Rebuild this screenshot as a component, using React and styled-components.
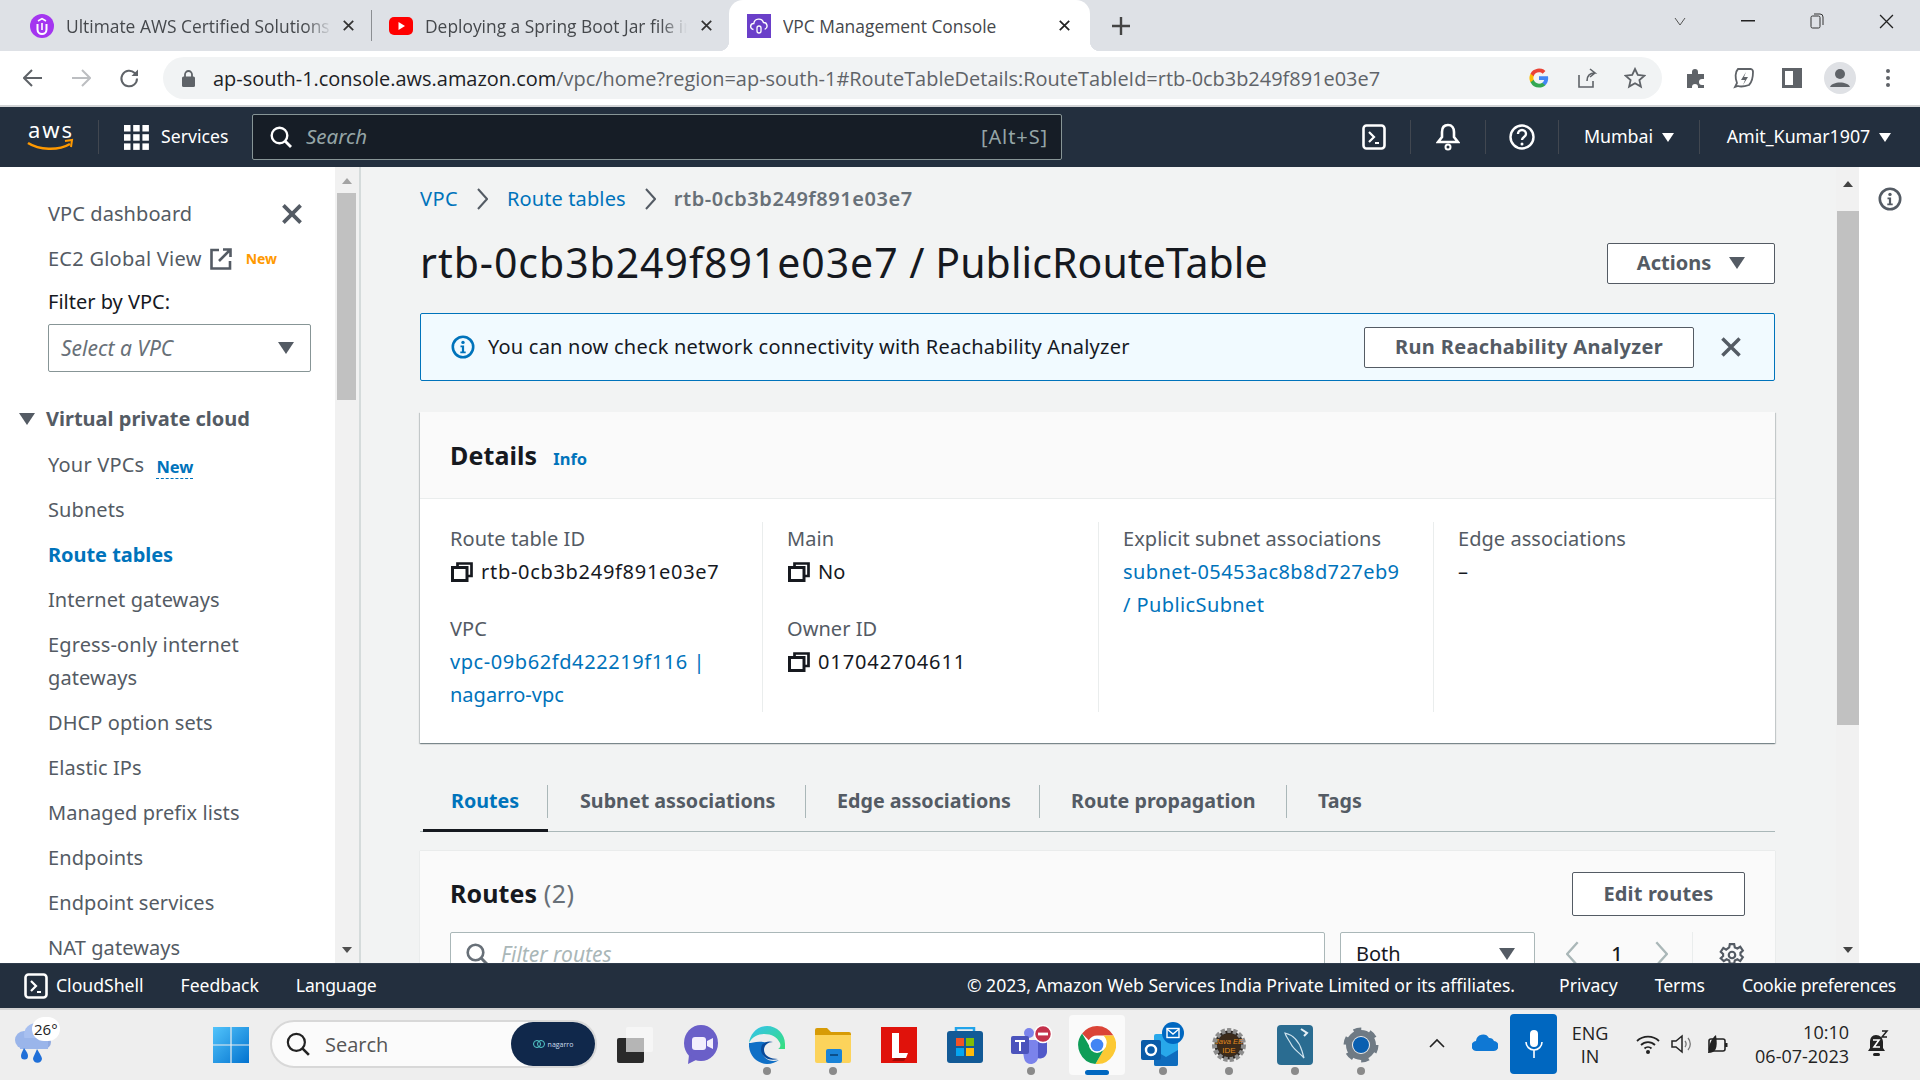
import React from "react";
import styled, { createGlobalStyle } from "styled-components";

const Global = createGlobalStyle`
  html, body { margin: 0; padding: 0; width: 1920px; height: 1080px; overflow: hidden; background: #fff; }
  * { box-sizing: border-box; }
  body { font-family: "Noto Sans", "Open Sans", Arial, sans-serif; }
`;
const Page = styled.div`width:1920px;height:1080px;display:flex;flex-direction:column;overflow:hidden;`;

/* Browser tabs */
const TabStrip = styled.div`height:51px;background:#dee1e6;display:flex;align-items:stretch;flex:none;`;
const Tab = styled.div`
  width:${p=>p.$w}px;flex:none;display:flex;align-items:center;padding-left:${p=>p.$pad}px;position:relative;
  background:${p=>p.$active?"#fff":"transparent"};border-radius:${p=>p.$active?"14px 14px 0 0":"0"};
  ${p=>p.$active?`
    &::before,&::after{content:'';position:absolute;bottom:0;width:10px;height:10px;}
    &::before{left:-10px;background:radial-gradient(circle at 0 0,transparent 10px,#fff 10.5px);}
    &::after{right:-10px;background:radial-gradient(circle at 100% 0,transparent 10px,#fff 10.5px);}
  `:""}
`;
const TabTitle = styled.span`
  font:17.4px "Open Sans","Noto Sans",sans-serif;color:#45484c;white-space:nowrap;width:${p=>p.$w}px;overflow:hidden;flex:none;margin-left:${p=>p.$ml}px;
  ${p=>p.$fade?"-webkit-mask-image:linear-gradient(90deg,#000 90%,transparent);":""}
`;
const TabClose = styled.span`margin-left:${p=>p.$ml}px;display:flex;flex:none;`;
const TabSep = styled.div`width:1px;height:31px;background:#8b8e92;align-self:center;flex:none;`;
const NewTab = styled.div`margin-left:21px;display:flex;align-items:center;flex:none;`;
const WinControls = styled.div`margin-left:auto;display:flex;align-items:center;height:42px;flex:none;`;
const WinBtn = styled.div`width:${p=>p.$w}px;display:flex;justify-content:center;flex:none;`;

/* Browser toolbar */
const Toolbar = styled.div`height:54px;background:#fff;display:flex;align-items:center;flex:none;padding-left:9px;`;
const NavBtn = styled.div`width:48px;display:flex;justify-content:center;flex:none;`;
const UrlPill = styled.div`width:1499px;height:42px;margin-left:10px;border-radius:21px;background:#f1f3f4;display:flex;align-items:center;flex:none;padding-left:19px;`;
const UrlHost = styled.span`font:19.95px "Open Sans","Noto Sans",sans-serif;color:#202124;margin-left:18px;white-space:nowrap;`;
const UrlRest = styled.span`color:#5f6368;`;
const PillIcons = styled.div`margin-left:auto;display:flex;align-items:center;padding-right:3px;`;
const PillIcon = styled.div`width:48px;display:flex;justify-content:center;`;
const ToolIcons = styled.div`display:flex;align-items:center;margin-left:10px;`;
const ToolIcon = styled.div`width:48px;display:flex;justify-content:center;`;
const Divider2 = styled.div`height:2px;background:#d2d4d6;flex:none;`;

/* AWS nav */
const AwsNav = styled.div`height:60px;background:#232f3e;display:flex;align-items:center;flex:none;color:#fff;`;
const LogoBox = styled.div`width:99px;height:34px;padding-left:26px;display:flex;align-items:center;border-right:1px solid #414750;flex:none;`;
const ServicesBtn = styled.div`width:153px;display:flex;align-items:center;padding-left:25px;gap:12px;font-size:17.7px;flex:none;`;
const NavText = styled.span`padding-bottom:2px;white-space:nowrap;`;
const SearchBox = styled.div`width:810px;height:46px;background:#161d26;border:1px solid #879596;border-radius:2px;display:flex;align-items:center;padding-left:17px;flex:none;`;
const SearchText = styled.span`font-style:italic;font-size:20.5px;color:#95a5a6;margin-left:14px;padding-bottom:2px;`;
const SearchKey = styled.span`font-size:20px;letter-spacing:.9px;color:#95a5a6;margin-left:auto;padding-right:13px;padding-bottom:2px;`;
const NavRight = styled.div`margin-left:auto;display:flex;align-items:center;height:34px;`;
const NavCell = styled.div`
  height:34px;width:${p=>p.$w}px;display:flex;align-items:center;justify-content:center;gap:${p=>p.$gap||10}px;font-size:17.8px;flex:none;
  padding-right:${p=>p.$pr||0}px;
  ${p=>p.$sep?"border-right:1px solid #414750;":""}
`;
const Caret = styled.span`width:0;height:0;border-left:${p=>p.$s||6}px solid transparent;border-right:${p=>p.$s||6}px solid transparent;border-top:${p=>(p.$s||6)*1.5}px solid ${p=>p.$c||"#fff"};flex:none;display:inline-block;`;

/* Layout */
const Body = styled.div`flex:1;display:flex;min-height:0;overflow:hidden;`;
const Side = styled.aside`width:335px;flex:none;background:#fff;display:flex;flex-direction:column;padding-top:24px;overflow:hidden;`;
const SideRow = styled.div`
  height:${p=>p.$h||45}px;display:flex;align-items:center;padding-left:48px;font-size:20px;letter-spacing:${p=>p.$ls||.08}px;flex:none;color:${p=>p.$c||"#545b64"};font-weight:${p=>p.$b?700:400};white-space:nowrap;
`;
const SideClose = styled.span`margin-left:auto;margin-right:33px;display:flex;`;
const NewTag = styled.span`font-size:${p=>p.$fs}px;font-weight:700;letter-spacing:0;color:${p=>p.$c};margin-left:${p=>p.$ml}px;${p=>p.$dash?"border-bottom:1px dashed #0073bb;line-height:23px;margin-top:4px;":""}`;
const FilterLabel = styled.div`height:41px;display:flex;align-items:center;padding-left:48px;font-size:20px;color:#16191f;flex:none;`;
const SideSelect = styled.div`margin:2px 0 0 48px;width:263px;height:48px;flex:none;border:1px solid #879596;border-radius:2px;display:flex;align-items:center;justify-content:space-between;padding:0 16px 0 12px;font-style:italic;font-size:21px;color:#687078;`;
const SideHead = styled.div`margin-top:23px;height:47px;display:flex;align-items:center;padding-left:19px;gap:11px;font-size:20px;font-weight:700;color:#545b64;flex:none;`;
const SideWrap = styled.div`padding:6px 40px 6px 48px;font-size:20px;line-height:33px;letter-spacing:.12px;color:#545b64;flex:none;`;
const VBar = styled.div`
  width:${p=>p.$w}px;flex:none;background:#f1f1f1;display:flex;flex-direction:column;align-items:center;justify-content:space-between;position:relative;
  ${p=>p.$line?"border-right:2px solid #d5dbdb;":""}
  padding:${p=>p.$pt}px 0 10px;
`;
const VThumb = styled.div`position:absolute;left:${p=>p.$l}px;right:${p=>p.$r}px;top:${p=>p.$t}px;height:${p=>p.$h}px;background:#c1c1c1;`;
const Arrow = styled.span`width:0;height:0;border-left:5px solid transparent;border-right:5px solid transparent;${p=>p.$up?`border-bottom:6px solid ${p.$c};`:`border-top:6px solid ${p.$c};`}`;

const Main = styled.main`width:1475px;flex:none;background:#f2f3f3;padding-left:59px;overflow:hidden;`;
const Column = styled.div`width:1355px;`;
const Crumbs = styled.div`height:64px;display:flex;align-items:center;font-size:20px;padding-bottom:2px;`;
const CrumbLink = styled.span`color:#0073bb;letter-spacing:${p=>p.$ls||0}px;`;
const CrumbNow = styled.span`color:#687078;font-weight:600;letter-spacing:.55px;`;
const CrumbGap = styled.span`width:${p=>p.$w}px;display:flex;justify-content:center;padding-top:2px;`;
const HeadRow = styled.div`height:41px;margin-top:12px;display:flex;align-items:center;justify-content:space-between;`;
const H1 = styled.h1`margin:0;font-size:41px;letter-spacing:.07px;font-weight:400;color:#16191f;white-space:nowrap;padding-bottom:3px;`;
const H1Id = styled.span`letter-spacing:.95px;`;
const Btn = styled.div`
  width:${p=>p.$w}px;height:${p=>p.$h}px;flex:none;background:#fff;border:1px solid #545b64;border-radius:2px;display:flex;align-items:center;justify-content:center;gap:${p=>p.$gap||0}px;
  font-size:20px;font-weight:700;letter-spacing:${p=>p.$ls||0}px;color:#545b64;white-space:nowrap;padding-bottom:2px;
`;
const Banner = styled.div`margin-top:29px;height:68px;background:#f1faff;border:1px solid #0073bb;border-radius:2px;display:flex;align-items:center;padding-left:30px;`;
const BannerText = styled.span`margin-left:13px;font-size:20px;letter-spacing:.22px;color:#16191f;padding-bottom:1px;`;
const BannerEnd = styled.div`margin-left:auto;display:flex;align-items:center;`;
const BannerClose = styled.span`width:80px;padding-right:6px;display:flex;justify-content:center;`;
const Card = styled.section`background:#fff;box-shadow:0 1px 1px 0 rgba(0,28,36,.3),1px 1px 1px 0 rgba(0,28,36,.15),-1px 1px 1px 0 rgba(0,28,36,.15);`;
const DetailsCard = styled(Card)`margin-top:31px;height:331px;`;
const CardHead = styled.div`height:87px;background:#fafafa;border-bottom:1px solid #eaeded;display:flex;align-items:center;padding-left:30px;gap:16px;`;
const H2 = styled.h2`margin:0;font-size:25px;letter-spacing:.1px;font-weight:700;color:#16191f;`;
const InfoLink = styled.span`font-size:16.5px;font-weight:700;color:#0073bb;padding-top:6px;`;
const Grid = styled.div`display:grid;grid-template-columns:343px 336px 335px 1fr;margin-top:23px;`;
const Col = styled.div`height:190px;padding-left:${p=>p.$p}px;${p=>p.$sep?"border-right:1px solid #eaeded;":""}`;
const Label = styled.div`font-size:20px;letter-spacing:.05px;line-height:33px;color:#545b64;margin-top:${p=>p.$mt||0}px;height:33px;`;
const Value = styled.div`font-size:20px;line-height:33px;letter-spacing:${p=>p.$ls||0}px;color:#16191f;display:flex;align-items:center;gap:8px;`;
const CopyIcon = styled.span`display:flex;margin-left:1px;`;
const Anchor = styled.div`font-size:20px;line-height:33px;letter-spacing:${p=>p.$ls||0}px;color:#0073bb;white-space:nowrap;`;

const Tabs = styled.div`margin-top:42px;height:47px;display:flex;border-bottom:1px solid #aab7b8;position:relative;padding-left:3px;`;
const TabBtn = styled.div`
  width:${p=>p.$w}px;height:47px;flex:none;
  font-size:19.7px;font-weight:700;color:${p=>p.$on?"#0073bb":"#545b64"};white-space:nowrap;
  ${p=>p.$on?"border-bottom:3px solid #16191f;":""}
`;
const TabInner = styled.div`height:33px;display:flex;align-items:center;padding-left:${p=>p.$p}px;padding-bottom:2px;${p=>p.$sep?"border-right:1px solid #aab7b8;":""}`;
const RoutesCard = styled(Card)`margin-top:19px;height:140px;background:#fafafa;box-shadow:0 0 1px 0 rgba(0,28,36,.2);padding:21px 30px 0;`;
const RoutesHead = styled.div`display:flex;justify-content:space-between;align-items:center;height:44px;`;
const RoutesTitle = styled(H2)`padding-bottom:2px;`;
const Count = styled.span`font-weight:400;color:#687078;letter-spacing:.5px;`;
const FilterRow = styled.div`display:flex;align-items:flex-start;margin-top:16px;`;
const FilterInput = styled.div`width:875px;height:48px;flex:none;background:#fff;border:1px solid #aab7b8;border-radius:2px;display:flex;align-items:center;padding:0 0 5px 15px;gap:13px;font-style:italic;font-size:21px;color:#aab7b8;`;
const BothSel = styled.div`width:195px;height:48px;margin-left:15px;flex:none;background:#fff;border:1px solid #aab7b8;border-radius:2px;display:flex;align-items:center;justify-content:space-between;padding:0 19px 5px 15px;font-size:20px;color:#16191f;`;
const Pager = styled.div`margin-left:31px;height:48px;width:127px;flex:none;display:flex;align-items:center;justify-content:space-between;font-size:20px;font-weight:500;color:#16191f;border-right:1px solid #eaeded;padding:0 24px 5px 0;`;
const GearBox = styled.div`width:52px;height:48px;display:flex;align-items:center;justify-content:flex-end;padding:0 0 3px;flex:none;`;

const RightPanel = styled.div`flex:1;background:#fff;display:flex;justify-content:center;padding-top:20px;`;

/* Footer */
const Footer = styled.footer`height:45px;flex:none;background:#232f3e;color:#fff;display:flex;align-items:center;font-size:17.6px;padding:0 24px 0 24px;border-top:1px solid #2f3c4c;`;
const FootLeft = styled.div`display:flex;align-items:center;`;
const FootRight = styled.div`margin-left:auto;display:flex;align-items:center;gap:37px;`;
const FootCopy = styled.span`margin-right:7px;letter-spacing:-.03px;padding-bottom:2px;`;
const FootLink = styled.span`margin-left:${p=>p.$ml||0}px;white-space:nowrap;letter-spacing:${p=>p.$ls||0}px;padding-bottom:2px;`;

/* Taskbar */
const Taskbar = styled.div`height:72px;flex:none;background:#eeeeee;border-top:2px solid #d3d3d3;display:flex;align-items:flex-start;position:relative;`;
const Weather = styled.div`width:198px;flex:none;height:70px;position:relative;`;
const WeatherCloud = styled.span`position:absolute;left:14px;top:12px;`;
const WeatherTemp = styled.span`position:absolute;left:32px;top:7px;font:15px "Open Sans",sans-serif;color:#222;background:#fff;border-radius:12px;padding:2px 2px;line-height:20px;`;
const Slot = styled.div`
  width:66px;height:70px;flex:none;display:flex;justify-content:center;align-items:center;position:relative;padding-bottom:1px;
  ${p=>p.$active?"&::before{content:'';position:absolute;left:5px;right:5px;top:5px;bottom:5px;background:#fafafa;border-radius:4px;}":""}
  & > svg{position:relative;}
`;
const Dot = styled.span`position:absolute;bottom:5px;left:50%;transform:translateX(-50%);width:${p=>p.$wide?24:8}px;height:${p=>p.$wide?5:8}px;border-radius:4px;background:${p=>p.$wide?"#0067c0":"#8a8a8a"};`;
const TaskSearch = styled.div`width:327px;height:48px;margin:10px 5px 0 6px;flex:none;background:#fbfbfb;border:2px solid #d8d8d8;border-radius:24px;display:flex;align-items:center;padding-left:14px;font:20px "Open Sans",sans-serif;color:#555;position:relative;`;
const SearchWord = styled.span`margin-left:15px;`;
const Nagarro = styled.div`position:absolute;right:0;top:0;width:84px;height:44px;border-radius:22px;background:#10284b;display:flex;align-items:center;justify-content:center;gap:3px;font:7px "Open Sans",sans-serif;color:#cde;`;
const Tray = styled.div`display:flex;align-items:center;height:70px;margin-left:${p=>p.$ml||0}px;flex:none;padding-bottom:${p=>p.$pb}px;`;
const TrayCell = styled.div`width:${p=>p.$w}px;display:flex;justify-content:center;flex:none;margin-left:${p=>p.$ml||0}px;padding-left:${p=>p.$pl||0}px;`;
const Mic = styled.div`width:47px;height:60px;margin:4px 0 0;background:#0067c0;border-radius:4px;display:flex;align-items:center;justify-content:center;flex:none;`;
const Lang = styled.div`width:66px;text-align:center;font:18px/23px "Open Sans",sans-serif;color:#222;flex:none;padding-top:2px;margin-right:2px;`;
const Clock = styled.div`width:110px;text-align:right;font:18px/24px "Open Sans",sans-serif;color:#222;flex:none;margin-left:-1px;`;

const X = ({s=14,c="#45484c",w=2}) => <svg width={s} height={s} viewBox="0 0 14 14"><path d="M1 1l12 12M13 1L1 13" stroke={c} strokeWidth={w} fill="none"/></svg>;
const Chevron = ({c="#545b64",dir="r",w=12,h=22,sw=2}) => <svg width={w} height={h} viewBox="0 0 12 22"><path d={dir==="r"?"M2 1l9 10-9 10":"M10 1L1 11l9 10"} stroke={c} strokeWidth={sw} fill="none"/></svg>;
const Copy = () => <CopyIcon><svg width="22" height="20" viewBox="0 0 22 20"><path d="M6.500 5V1.500h14V14H16" fill="none" stroke="#16191f" strokeWidth="2.700"/><rect x="1.500" y="5.500" width="14.500" height="13" fill="none" stroke="#16191f" strokeWidth="3"/></svg></CopyIcon>;
const InfoCircle = ({c,s=24}) => <svg width={s} height={s} viewBox="0 0 24 24"><circle cx="12" cy="12" r="10.200" fill="none" stroke={c} strokeWidth="2.600"/><circle cx="12" cy="7.400" r="1.700" fill={c}/><path d="M9.500 10.500h3.600v6h1.600v1.800H9.300v-1.800h1.600v-4.200H9.500z" fill={c}/></svg>;
const Search = ({c="#fff",s=22,w=2.4}) => <svg width={s} height={s} viewBox="0 0 22 22"><circle cx="9.500" cy="9.500" r="7.800" fill="none" stroke={c} strokeWidth={w}/><path d="M15 15l6 6" stroke={c} strokeWidth={w+.4}/></svg>;
const ShellIcon = ({s=24}) => <svg width={s} height={s+2} viewBox="0 0 24 26"><rect x="1.500" y="1.500" width="21" height="23" rx="3" fill="none" stroke="#fff" strokeWidth="2.600"/><path d="M7 8l5 5-5 5" fill="none" stroke="#fff" strokeWidth="2.200"/><path d="M13 19h4" stroke="#fff" strokeWidth="2"/></svg>;

const Udemy = () => <svg width="24" height="24" viewBox="0 0 24 24"><circle cx="12" cy="12" r="12" fill="#a435f0"/><path d="M7.500 10v5.500a4.500 4.500 0 009 0V10" fill="none" stroke="#fff" strokeWidth="2"/><path d="M8 7l4-2.400L16 7" fill="none" stroke="#fff" strokeWidth="1.600"/><path d="M12 9v7" stroke="#fff" strokeWidth="1.600"/></svg>;
const YouTube = () => <svg width="24" height="18" viewBox="0 0 24 18"><rect width="24" height="18" rx="5" fill="#f00"/><path d="M9.500 5l6.500 4-6.500 4z" fill="#fff"/></svg>;
const VpcFav = () => <svg width="24" height="24" viewBox="0 0 24 24"><rect width="24" height="24" fill="#6a3fc9"/><path d="M6.500 15.500a3 3 0 01.3-6A5 5 0 0116.500 8.500a3.500 3.500 0 011.200 6.800" fill="none" stroke="#fff" strokeWidth="1.400"/><rect x="10" y="12" width="4" height="7" rx="2" fill="none" stroke="#fff" strokeWidth="1.300"/></svg>;
const GIcon = () => <svg width="20" height="20" viewBox="0 0 24 24"><path d="M23 12.300c0-.8-.1-1.600-.2-2.300H12v4.400h6.200a5.300 5.300 0 01-2.300 3.400v2.900h3.700c2.200-2 3.400-5 3.400-8.400z" fill="#4285f4"/><path d="M12 23.500c3.100 0 5.700-1 7.600-2.800l-3.700-2.900c-1 .7-2.400 1.100-3.900 1.100-3 0-5.500-2-6.400-4.700H1.800v3A11.500 11.500 0 0012 23.500z" fill="#34a853"/><path d="M5.600 14.200a6.900 6.900 0 010-4.400v-3H1.800a11.500 11.500 0 000 10.400z" fill="#fbbc05"/><path d="M12 5.100c1.700 0 3.200.6 4.400 1.700l3.300-3.300A11.500 11.500 0 001.800 6.800l3.800 3C6.500 7.100 9 5.100 12 5.100z" fill="#ea4335"/></svg>;

const Win11 = () => <svg width="36" height="36" viewBox="0 0 36 36"><defs><linearGradient id="wg" x1="0" y1="0" x2="1" y2="1"><stop offset="0" stopColor="#52c4fb"/><stop offset="1" stopColor="#0272cf"/></linearGradient></defs><path d="M0 0h17.400v17.400H0zM18.600 0H36v17.400H18.600zM0 18.600h17.400V36H0zM18.600 18.600H36V36H18.600z" fill="url(#wg)"/></svg>;
const TaskView = () => <svg width="36" height="36" viewBox="0 0 36 36"><rect x="0" y="11" width="27" height="25" rx="2" fill="#2a2a2a"/><rect x="9" y="0" width="27" height="25" rx="2" fill="#f6f6f6"/><rect x="9" y="11" width="18" height="14" fill="#b5b5b5"/></svg>;
const Meet = () => <svg width="36" height="40" viewBox="0 0 36 40"><ellipse cx="18" cy="18" rx="17" ry="18" fill="#6a5fc8"/><path d="M6 30l-1 9 10-5z" fill="#6a5fc8"/><rect x="9" y="12" width="14" height="13" rx="3" fill="#f3eefc"/><path d="M24 16l6-3v11l-6-3z" fill="#f3eefc"/></svg>;
const Edge = () => <svg width="36" height="38" viewBox="0 0 36 38"><defs><linearGradient id="eg" x1="0" y1="0" x2="1" y2="1"><stop offset="0" stopColor="#35c1f1"/><stop offset="1" stopColor="#36e07a"/></linearGradient></defs><path d="M18 0C8 0 1 8 0 17c3-6 9-9 15-9 8 0 13 3 16 9 1 3 0 5-2 6h7V18C36 8 28 0 18 0z" fill="url(#eg)"/><path d="M0 17c-1 12 8 21 18 21 5 0 9-2 12-4-8 3-17-1-17-10 0-3 2-6 5-7-8-3-15 0-18 0z" fill="#0f6fc6"/><path d="M15 24c0-5 4-8 9-8-3-1-8-1-11 3-2 4-1 10 4 13 3 2 8 2 12 1-7 0-14-3-14-9z" fill="#094a9a"/></svg>;
const Folder = () => <svg width="36" height="36" viewBox="0 0 36 36"><path d="M0 3a2 2 0 012-2h10l4 4h18a2 2 0 012 2v5H0z" fill="#d79b06"/><path d="M0 8h36v26a2 2 0 01-2 2H2a2 2 0 01-2-2z" fill="#fcd35b"/><rect x="11" y="22" width="16" height="14" rx="2" fill="#1a84d8"/><rect x="15" y="27" width="8" height="2" fill="#0b4f8a"/></svg>;
const LApp = () => <svg width="36" height="36" viewBox="0 0 36 36"><rect width="36" height="36" fill="#e0120b"/><path d="M11 6h7v20h9l-2 5H11z" fill="#fff"/><path d="M14 31h11l-2 3H11z" fill="#a10a05"/></svg>;
const Store = () => <svg width="36" height="36" viewBox="0 0 36 36"><path d="M9 5V1h18v4" fill="none" stroke="#21a4ea" strokeWidth="2.500"/><rect y="4" width="36" height="32" rx="3" fill="#125a96"/><rect x="9" y="11" width="8" height="8" fill="#f35325"/><rect x="19" y="11" width="8" height="8" fill="#81bc06"/><rect x="9" y="21" width="8" height="8" fill="#05a6f0"/><rect x="19" y="21" width="8" height="8" fill="#ffba08"/></svg>;
const Teams = () => <svg width="42" height="40" viewBox="0 0 42 40"><circle cx="19" cy="8" r="5" fill="#7b83eb"/><circle cx="31" cy="11" r="4" fill="#5059c9"/><path d="M24 15h13v12a7 7 0 01-13 3z" fill="#5059c9"/><path d="M11 15h17v16a7 7 0 01-14 2z" fill="#7b83eb"/><rect x="1" y="11" width="18" height="18" rx="2" fill="#4b53bc"/><path d="M5 15h10v2h-4v9H9v-9H5z" fill="#fff"/><circle cx="33" cy="9" r="8.500" fill="#c4314b" stroke="#fff" strokeWidth="1.500"/><rect x="28" y="7.600" width="10" height="2.800" fill="#fff"/></svg>;
const Chrome = () => <svg width="38" height="38" viewBox="0 0 48 48"><circle cx="24" cy="24" r="24" fill="#fff"/><path d="M24 0a24 24 0 0120.800 12H24a12 12 0 00-10.400 6L5.200 9.500A24 24 0 0124 0z" fill="#db4437"/><path d="M44.800 12A24 24 0 0122 47.900L32.400 30a12 12 0 00-.4-18z" fill="#fcc934"/><path d="M22 47.900A24 24 0 015.200 9.500l8.400 14.500A12 12 0 0032.400 30z" fill="#0f9d58"/><circle cx="24" cy="24" r="10" fill="#fff"/><circle cx="24" cy="24" r="8" fill="#4285f4"/></svg>;
const Outlook = () => <svg width="46" height="46" viewBox="0 0 46 46"><rect x="14" y="12" width="24" height="32" rx="2" fill="#28a8ea"/><path d="M14 28l12 7 12-7v14a2 2 0 01-2 2H16a2 2 0 01-2-2z" fill="#0f6cbd"/><rect x="1" y="18" width="20" height="20" rx="2" fill="#0a5ba8"/><circle cx="11" cy="28" r="5" fill="none" stroke="#fff" strokeWidth="2.400"/><circle cx="33" cy="11" r="11" fill="#0067c0"/><rect x="27" y="6.500" width="12" height="9" fill="none" stroke="#fff" strokeWidth="1.400"/><path d="M27 7l6 5 6-5" fill="none" stroke="#fff" strokeWidth="1.400"/></svg>;
const JavaIde = () => <svg width="36" height="38" viewBox="0 0 36 38"><circle cx="18" cy="19" r="14.500" fill="#2f2a26" stroke="#8d8d8d" strokeWidth="5" strokeDasharray="4 2"/><circle cx="18" cy="19" r="11.500" fill="#3b2a1a"/><text x="18" y="18" textAnchor="middle" fontFamily="Liberation Sans" fontSize="7.500" fontStyle="italic" fill="#e08a1e">Java EE</text><text x="18" y="27" textAnchor="middle" fontFamily="Liberation Sans" fontSize="8" fill="#e08a1e">IDE</text></svg>;
const MySql = () => <svg width="36" height="40" viewBox="0 0 36 40"><rect width="36" height="40" rx="4" fill="#2a6c91"/><path d="M8 8c8 2 14 8 17 18l2 7c-5-6-10-8-13-14-2-4-5-7-6-11z" fill="none" stroke="#cfe3ee" strokeWidth="1.200"/><path d="M24 4l6 4-3 3" stroke="#e6f0f6" strokeWidth="2" fill="none"/></svg>;
const WinGear = () => <svg width="36" height="38" viewBox="0 0 36 38"><circle cx="18" cy="19" r="12" fill="none" stroke="#6f7a84" strokeWidth="6"/><circle cx="18" cy="19" r="14" fill="none" stroke="#6f7a84" strokeWidth="7" strokeDasharray="7 7.700"/><circle cx="18" cy="19" r="8" fill="#0a5fb0"/></svg>;
const RainCloud = () => <svg width="38" height="42" viewBox="0 0 38 42"><circle cx="10" cy="18" r="9" fill="#9ab5ea"/><circle cx="22" cy="13" r="12" fill="#a8c0f0"/><circle cx="30" cy="20" r="7" fill="#8fa9e0"/><rect x="6" y="16" width="28" height="11" fill="#9ab5ea"/><path d="M10 26c3 4 4 6 4 8a3.500 3.500 0 01-7 0c0-2 1-4 3-8zM23 27c3 5 5 8 5 10a4.600 4.600 0 01-9 0c0-2 2-5 4-10z" fill="#1f6fd8"/></svg>;

const sideItems = ["Subnets"];
export default function App(){
  return (<Page><Global/>
    <TabStrip>
      <Tab $w={371} $pad={30}><Udemy/><TabTitle $ml={12} $w={266} $fade>Ultimate AWS Certified Solutions Architect</TabTitle><TabClose $ml={11}><X s={11} c="#333" w={2.200}/></TabClose></Tab>
      <TabSep/>
      <Tab $w={357} $pad={17}><YouTube/><TabTitle $ml={12} $w={262} $fade>Deploying a Spring Boot Jar file in AWS</TabTitle><TabClose $ml={14}><X s={11} c="#333" w={2.200}/></TabClose></Tab>
      <Tab $w={361} $pad={18} $active><VpcFav/><TabTitle $ml={12} $w={230}>VPC Management Console</TabTitle><TabClose $ml={46}><X s={11} c="#222" w={2.200}/></TabClose></Tab>
      <NewTab><svg width="20" height="20" viewBox="0 0 20 20"><path d="M10 1v18M1 10h18" stroke="#444" strokeWidth="2.400"/></svg></NewTab>
      <WinControls>
        <WinBtn $w={69}><svg width="12" height="9" viewBox="0 0 12 9"><path d="M1 1l5 7 5-7" fill="none" stroke="#555" strokeWidth="1"/></svg></WinBtn>
        <WinBtn $w={67}><svg width="14" height="2"><rect width="14" height="1.500" fill="#222"/></svg></WinBtn>
        <WinBtn $w={71}><svg width="14" height="16" viewBox="0 0 14 16"><rect x="1" y="3" width="9" height="12" rx="1.500" fill="none" stroke="#333"/><path d="M4 1h6a3 3 0 013 3v8" fill="none" stroke="#333"/></svg></WinBtn>
        <WinBtn $w={68}><X s={15} c="#222" w={1.200}/></WinBtn>
      </WinControls>
    </TabStrip>
    <Toolbar>
      <NavBtn><svg width="20" height="20" viewBox="0 0 20 20"><path d="M19 10H2M9 2l-8 8 8 8" fill="none" stroke="#5f6368" strokeWidth="2"/></svg></NavBtn>
      <NavBtn><svg width="20" height="20" viewBox="0 0 20 20"><path d="M1 10h17M11 2l8 8-8 8" fill="none" stroke="#bcbec1" strokeWidth="2"/></svg></NavBtn>
      <NavBtn><svg width="21" height="21" viewBox="0 0 21 21"><path d="M18 10.500a7.800 7.800 0 11-2.300-5.500L18 7.500" fill="none" stroke="#5f6368" strokeWidth="2"/><path d="M19 1.500V8h-6.500z" fill="#5f6368"/></svg></NavBtn>
      <UrlPill>
        <svg width="13" height="17" viewBox="0 0 13 17"><rect y="6.500" width="13" height="10.500" rx="1.500" fill="#5f6368"/><path d="M3 7V4.500a3.500 3.500 0 017 0V7" fill="none" stroke="#5f6368" strokeWidth="1.800"/></svg>
        <UrlHost>ap-south-1.console.aws.amazon.com<UrlRest>/vpc/home?region=ap-south-1#RouteTableDetails:RouteTableId=rtb-0cb3b249f891e03e7</UrlRest></UrlHost>
        <PillIcons>
          <PillIcon><GIcon/></PillIcon>
          <PillIcon><svg width="22" height="22" viewBox="0 0 22 22"><path d="M11 14c0-5 3-8 8-8l-5-4M19 6l-5 4" fill="none" stroke="#5f6368" strokeWidth="1.600"/><path d="M3 8v12h14v-6" fill="none" stroke="#5f6368" strokeWidth="1.600"/></svg></PillIcon>
          <PillIcon><svg width="22" height="22" viewBox="0 0 22 22"><path d="M11 2l2.800 6 6.600.7-5 4.400 1.500 6.500L11 16.300l-5.900 3.300 1.500-6.500-5-4.400L8.200 8z" fill="none" stroke="#5f6368" strokeWidth="1.800"/></svg></PillIcon>
        </PillIcons>
      </UrlPill>
      <ToolIcons>
        <ToolIcon><svg width="22" height="22" viewBox="0 0 22 22"><path d="M2 7h5V5a3 3 0 016 0v2h6v5h-2a3 3 0 000 6h2v3H13v-1a3 3 0 00-6 0v1H2z" fill="#5f6368"/></svg></ToolIcon>
        <ToolIcon><svg width="22" height="24" viewBox="0 0 22 24"><path d="M5 3h13a3 3 0 012 3c0 5-1 10-4 13-3 1-8 2-11 1l-3 1 2-4C2 12 2 6 5 3z" fill="none" stroke="#5f6368" strokeWidth="1.800"/><path d="M13 6l-5 8h4l-2 5 5-8h-4z" fill="#5f6368"/></svg></ToolIcon>
        <ToolIcon><svg width="22" height="22" viewBox="0 0 22 22"><path d="M1 1h20v20H1z" fill="#5f6368"/><rect x="4" y="4" width="8" height="14" fill="#fff"/></svg></ToolIcon>
        <ToolIcon><svg width="32" height="32" viewBox="0 0 32 32"><circle cx="16" cy="16" r="16" fill="#dfe1e5"/><circle cx="16" cy="12" r="5" fill="#5f6368"/><path d="M6 25c2-6 18-6 20 0z" fill="#5f6368"/></svg></ToolIcon>
        <ToolIcon><svg width="6" height="20" viewBox="0 0 6 20"><circle cx="3" cy="3" r="2" fill="#5f6368"/><circle cx="3" cy="10" r="2" fill="#5f6368"/><circle cx="3" cy="17" r="2" fill="#5f6368"/></svg></ToolIcon>
      </ToolIcons>
    </Toolbar>
    <Divider2/>
    <AwsNav>
      <LogoBox><svg width="50" height="32" viewBox="0 0 50 32"><text x="2" y="17" fontFamily="Noto Sans" fontSize="22" fill="#fff" textLength="44">aws</text><path d="M2 22c11 7 30 8 42 1" fill="none" stroke="#f90" strokeWidth="2.600"/><path d="M39 20l7-1-1 7" fill="none" stroke="#f90" strokeWidth="2"/></svg></LogoBox>
      <ServicesBtn>
        <svg width="25" height="25" viewBox="0 0 25 25" fill="#fff"><rect width="6.500" height="6.500"/><rect x="9.200" width="6.500" height="6.500"/><rect x="18.400" width="6.500" height="6.500"/><rect y="9.200" width="6.500" height="6.500"/><rect x="9.200" y="9.200" width="6.500" height="6.500"/><rect x="18.400" y="9.200" width="6.500" height="6.500"/><rect y="18.400" width="6.500" height="6.500"/><rect x="9.200" y="18.400" width="6.500" height="6.500"/><rect x="18.400" y="18.400" width="6.500" height="6.500"/></svg>
        <NavText>Services</NavText>
      </ServicesBtn>
      <SearchBox><Search/><SearchText>Search</SearchText><SearchKey>[Alt+S]</SearchKey></SearchBox>
      <NavRight>
        <NavCell $w={66} $sep $pr={8}><ShellIcon/></NavCell>
        <NavCell $w={75} $sep><svg width="24" height="28" viewBox="0 0 24 28"><path d="M12 2c-4 0-6 3-6 7v5l-4 5h20l-4-5V9c0-4-2-7-6-7z" fill="none" stroke="#fff" strokeWidth="2.600"/><circle cx="12" cy="24" r="2.500" fill="none" stroke="#fff" strokeWidth="2"/></svg></NavCell>
        <NavCell $w={73} $sep><svg width="26" height="26" viewBox="0 0 26 26"><circle cx="13" cy="13" r="11.500" fill="none" stroke="#fff" strokeWidth="2.400"/><path d="M9 10a4 4 0 118 0c0 3-4 3-4 6" fill="none" stroke="#fff" strokeWidth="2.400"/><circle cx="13" cy="20" r="1.500" fill="#fff"/></svg></NavCell>
        <NavCell $w={141} $sep $gap={9}><NavText>Mumbai</NavText><Caret/></NavCell>
        <NavCell $w={220} $gap={9} $pr={2}><NavText>Amit_Kumar1907</NavText><Caret/></NavCell>
      </NavRight>
    </AwsNav>
    <Body>
      <Side>
        <SideRow>VPC dashboard<SideClose><X s={20} c="#545b64" w={2.600}/></SideClose></SideRow>
        <SideRow $ls={.25}>EC2 Global View<svg style={{marginLeft:8}} width="22" height="22" viewBox="0 0 22 22"><path d="M9 2H1.500v18.500H20V13" fill="none" stroke="#545b64" strokeWidth="2.600"/><path d="M9 13L20 2M13 1.500h7.500V9" fill="none" stroke="#545b64" strokeWidth="2.600"/></svg><NewTag $fs={14} $c="#ff9900" $ml={14}>New</NewTag></SideRow>
        <FilterLabel>Filter by VPC:</FilterLabel>
        <SideSelect>Select a VPC<Caret $s={8} $c="#545b64"/></SideSelect>
        <SideHead><Caret $s={8} $c="#545b64"/>Virtual private cloud</SideHead>
        <SideRow $ls={.2}>Your VPCs<NewTag $fs={16.500} $c="#0073bb" $ml={12} $dash>New</NewTag></SideRow>
        {sideItems.map(t=><SideRow key={t}>{t}</SideRow>)}
        <SideRow $c="#0073bb" $b $ls={-.05}>Route tables</SideRow>
        <SideRow>Internet gateways</SideRow>
        <SideWrap>Egress-only internet<br/>gateways</SideWrap>
        <SideRow>DHCP option sets</SideRow>
        <SideRow>Elastic IPs</SideRow>
        <SideRow>Managed prefix lists</SideRow>
        <SideRow>Endpoints</SideRow>
        <SideRow>Endpoint services</SideRow>
        <SideRow>NAT gateways</SideRow>
      </Side>
      <VBar $w={26} $line $pt={11}>
        <VThumb $l={2} $r={3} $t={26} $h={207}/>
        <Arrow $up $c="#a3a3a3"/><Arrow $c="#505050"/>
      </VBar>
      <Main>
        <Column>
          <Crumbs>
            <CrumbLink $ls={.4}>VPC</CrumbLink><CrumbGap $w={49}><Chevron/></CrumbGap>
            <CrumbLink $ls={.12}>Route tables</CrumbLink><CrumbGap $w={48}><Chevron/></CrumbGap>
            <CrumbNow>rtb-0cb3b249f891e03e7</CrumbNow>
          </Crumbs>
          <HeadRow>
            <H1><H1Id>rtb-0cb3b249f891e03e7</H1Id> / PublicRouteTable</H1>
            <Btn $w={168} $h={41} $gap={18}>Actions<Caret $s={8} $c="#545b64"/></Btn>
          </HeadRow>
          <Banner>
            <InfoCircle c="#0073bb"/>
            <BannerText>You can now check network connectivity with Reachability Analyzer</BannerText>
            <BannerEnd><Btn $w={330} $h={41} $ls={.34}>Run Reachability Analyzer</Btn><BannerClose><X s={20} c="#545b64" w={2.400}/></BannerClose></BannerEnd>
          </Banner>
          <DetailsCard>
            <CardHead><H2>Details</H2><InfoLink>Info</InfoLink></CardHead>
            <Grid>
              <Col $p={30} $sep>
                <Label>Route table ID</Label>
                <Value $ls={.7}><Copy/>rtb-0cb3b249f891e03e7</Value>
                <Label $mt={24}>VPC</Label>
                <Anchor $ls={.58}>vpc-09b62fd422219f116 |</Anchor>
                <Anchor>nagarro-vpc</Anchor>
              </Col>
              <Col $p={24} $sep>
                <Label>Main</Label>
                <Value><Copy/>No</Value>
                <Label $mt={24}>Owner ID</Label>
                <Value $ls={.9}><Copy/>017042704611</Value>
              </Col>
              <Col $p={24} $sep>
                <Label>Explicit subnet associations</Label>
                <Anchor $ls={.42}>subnet-05453ac8b8d727eb9</Anchor>
                <Anchor $ls={.4}>/ PublicSubnet</Anchor>
              </Col>
              <Col $p={24}>
                <Label>Edge associations</Label>
                <Value>–</Value>
              </Col>
            </Grid>
          </DetailsCard>
          <Tabs>
            <TabBtn $w={125} $on><TabInner $p={28} $sep>Routes</TabInner></TabBtn>
            <TabBtn $w={258}><TabInner $p={32} $sep>Subnet associations</TabInner></TabBtn>
            <TabBtn $w={234}><TabInner $p={31} $sep>Edge associations</TabInner></TabBtn>
            <TabBtn $w={247}><TabInner $p={31} $sep>Route propagation</TabInner></TabBtn>
            <TabBtn $w={120}><TabInner $p={31}>Tags</TabInner></TabBtn>
          </Tabs>
          <RoutesCard>
            <RoutesHead><RoutesTitle>Routes <Count>(2)</Count></RoutesTitle><Btn $w={173} $h={44} $ls={.15}>Edit routes</Btn></RoutesHead>
            <FilterRow>
              <FilterInput><Search c="#687078" s={22} w={2.600}/>Filter routes</FilterInput>
              <BothSel>Both<Caret $s={8} $c="#545b64"/></BothSel>
              <Pager><Chevron c="#aab7b8" dir="l" w={14} h={26}/>1<Chevron c="#aab7b8" w={14} h={26}/></Pager>
              <GearBox><svg width="26" height="26" viewBox="0 0 24 24" fill="none" stroke="#545b64" strokeWidth="2"><circle cx="12" cy="12" r="3"/><path d="M10 2h4l.6 3 2.400 1 2.600-1.600 2.400 3.600-2.200 2v2l2.200 2-2.400 3.600-2.600-1.600-2.400 1-.6 3h-4l-.6-3-2.400-1-2.600 1.600L1.600 15 3.800 13v-2L1.600 9 4 5.400 6.600 7l2.800-2z"/></svg></GearBox>
            </FilterRow>
          </RoutesCard>
        </Column>
      </Main>
      <VBar $w={23} $pt={14}>
        <VThumb $l={1} $r={0} $t={44} $h={514}/>
        <Arrow $up $c="#444"/><Arrow $c="#444"/>
      </VBar>
      <RightPanel><InfoCircle c="#545b64" s={24}/></RightPanel>
    </Body>
    <Footer>
      <FootLeft><ShellIcon/><FootLink $ml={8}>CloudShell</FootLink><FootLink $ml={37}>Feedback</FootLink><FootLink $ml={37} $ls={-.2}>Language</FootLink></FootLeft>
      <FootRight><FootCopy>© 2023, Amazon Web Services India Private Limited or its affiliates.</FootCopy><FootLink>Privacy</FootLink><FootLink $ls={-.1}>Terms</FootLink><FootLink $ls={-.27}>Cookie preferences</FootLink></FootRight>
    </Footer>
    <Taskbar>
      <Weather><WeatherCloud><RainCloud/></WeatherCloud><WeatherTemp>26°</WeatherTemp></Weather>
      <Slot><Win11/></Slot>
      <TaskSearch><Search c="#222" s={24} w={2}/><SearchWord>Search</SearchWord>
        <Nagarro><svg width="12" height="10" viewBox="0 0 12 10"><circle cx="4" cy="5" r="3.500" fill="none" stroke="#5cc" /><circle cx="8" cy="5" r="3.500" fill="none" stroke="#5cc"/></svg>nagarro</Nagarro>
      </TaskSearch>
      <Slot><TaskView/></Slot>
      <Slot><Meet/></Slot>
      <Slot><Edge/><Dot/></Slot>
      <Slot><Folder/><Dot/></Slot>
      <Slot><LApp/></Slot>
      <Slot><Store/></Slot>
      <Slot><Teams/><Dot/></Slot>
      <Slot $active><Chrome/><Dot $wide/></Slot>
      <Slot><Outlook/><Dot/></Slot>
      <Slot><JavaIde/><Dot/></Slot>
      <Slot><MySql/><Dot/></Slot>
      <Slot><WinGear/><Dot/></Slot>
      <Tray $ml={29} $pb={4}>
        <TrayCell $w={28}><svg width="16" height="10" viewBox="0 0 16 10"><path d="M1 9l7-7 7 7" fill="none" stroke="#222" strokeWidth="1.600"/></svg></TrayCell>
        <TrayCell $w={59} $pl={9}><svg width="26" height="18" viewBox="0 0 26 18"><path d="M5 17a5 5 0 01-1-10 7 7 0 0113-3 5 5 0 015 3 5 5 0 01-1 10z" fill="#0f78d4"/></svg></TrayCell>
      </Tray>
      <Mic><svg width="18" height="30" viewBox="0 0 18 30"><rect x="5" y="1" width="8" height="17" rx="4" fill="#fff"/><path d="M1 13a8 8 0 0016 0M9 21v8" fill="none" stroke="#fff" strokeWidth="1.600"/></svg></Mic>
      <Tray $pb={2}>
        <Lang>ENG<br/>IN</Lang>
        <TrayCell $w={46}><svg width="24" height="22" viewBox="0 0 24 22"><path d="M1 8a16 16 0 0122 0M5 12a10 10 0 0114 0M8.500 15.500a5 5 0 017 0" fill="none" stroke="#222" strokeWidth="1.800"/><circle cx="12" cy="19" r="2" fill="#222"/></svg></TrayCell>
        <TrayCell $w={30} $ml={-5}><svg width="24" height="24" viewBox="0 0 24 24"><path d="M3 9h4l6-5v16l-6-5H3z" fill="none" stroke="#222" strokeWidth="1.500"/><path d="M16 9a5 5 0 010 6M19 6a9 9 0 010 12" fill="none" stroke="#777" strokeWidth="1.300"/></svg></TrayCell>
        <TrayCell $w={44}><svg width="26" height="22" viewBox="0 0 26 22"><rect x="4" y="6" width="16" height="12" rx="2" fill="none" stroke="#222" strokeWidth="1.600"/><rect x="20" y="10" width="2.500" height="4" fill="#222"/><path d="M3 20c8 0 10-5 8-18-5 4-7 10-8 18z" fill="#222"/></svg></TrayCell>
        <Clock>10:10<br/>06-07-2023</Clock>
        <TrayCell $w={58}><svg width="24" height="30" viewBox="0 0 24 30"><path d="M10 6c-4 0-6 3-6 7v6l-2 3h17l-2-3v-6c0-4-3-7-7-7z" fill="#222"/><rect x="7" y="24" width="7" height="3" rx="1.500" fill="#222"/><path d="M7 11h6l-5 7h6" fill="none" stroke="#fff" strokeWidth="1.600"/><path d="M16 2h5l-5 6h5" fill="none" stroke="#222" strokeWidth="1.500"/></svg></TrayCell>
      </Tray>
    </Taskbar>
  </Page>);
}
